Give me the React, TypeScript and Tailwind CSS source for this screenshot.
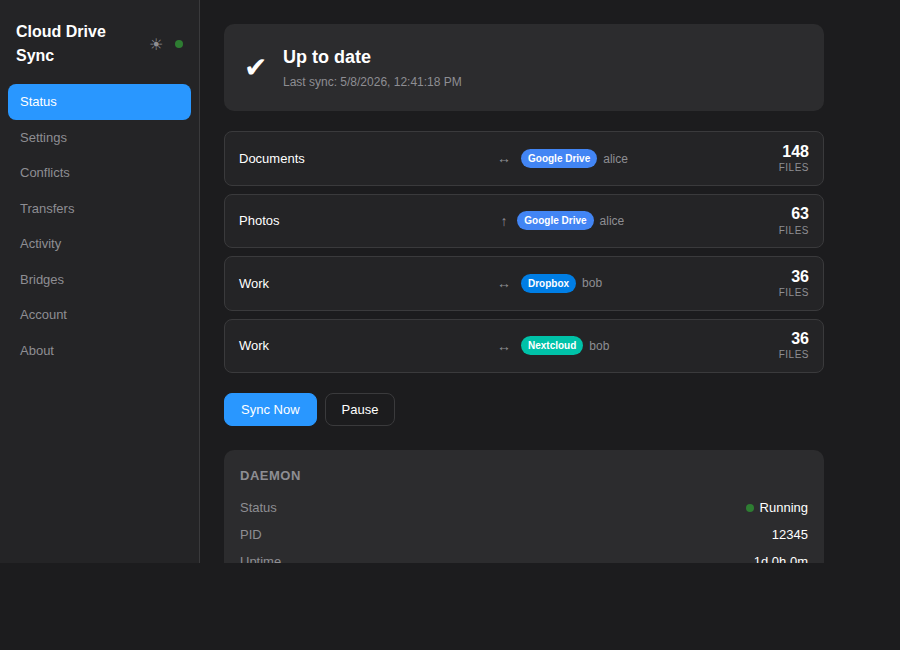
const nav = ["Status", "Settings", "Conflicts", "Transfers", "Activity", "Bridges", "Account", "About"];

const rows = [
  { name: "Documents", arrow: "↔", gap: "mr-[10px]", badge: "Google Drive", color: "bg-[#4285f4]", user: "alice", count: 148 },
  { name: "Photos", arrow: "↑", gap: "mr-[6.3px]", badge: "Google Drive", color: "bg-[#4285f4]", user: "alice", count: 63 },
  { name: "Work", arrow: "↔", gap: "mr-[10px]", badge: "Dropbox", color: "bg-[#007ee5]", user: "bob", count: 36 },
  { name: "Work", arrow: "↔", gap: "mr-[10px]", badge: "Nextcloud", color: "bg-[#00c2a8]", user: "bob", count: 36 },
];

const info = [
  ["PID", "12345"],
  ["Uptime", "1d 0h 0m"],
  ["Version", "1.0.0"],
];

export default function App() {
  return (
    <div className="h-[650px] overflow-hidden bg-[#1c1c1e] font-['Liberation_Sans',Arial,sans-serif] text-[13px] leading-normal text-white">
      <div className="flex h-[563px] overflow-hidden">
        <aside className="w-[200px] shrink-0 border-r border-[#3a3a3c] bg-[#242426] p-2">
          <div className="flex items-center justify-between px-2 pb-4 pt-3">
            <div className="w-[110px] text-[16px] font-bold leading-[24px]">Cloud Drive Sync</div>
            <div className="flex items-center gap-3">
              <span className="translate-y-px text-[16px] leading-none text-[#8e8e93]">☀</span>
              <span className="h-2 w-2 rounded-full bg-[#2e7d32]" />
            </div>
          </div>
          <nav className="flex flex-col">
            {nav.map((n, i) => (
              <div
                key={n}
                className={i === 0 ? "rounded-lg bg-[#2997ff] px-3 py-2 text-white" : "rounded-lg px-3 py-2 text-[#8e8e93]"}
              >
                {n}
              </div>
            ))}
          </nav>
        </aside>
        <main className="min-w-0 flex-1 overflow-hidden p-6">
          <div className="w-[600px]">
            <section className="mb-[20.4px] flex items-center gap-4 rounded-[10px] bg-[#2c2c2e] p-5">
              <span className="text-[28px] leading-none">✔</span>
              <div>
                <div className="text-[18px] font-bold leading-[27px]">Up to date</div>
                <div className="mt-0.5 text-[12px] text-[#8e8e93]">Last sync: 5/8/2026, 12:41:18 PM</div>
              </div>
            </section>
            <div className="flex flex-col gap-2">
              {rows.map((r, i) => (
                <div key={i} className="flex items-center rounded-lg border border-[#3a3a3c] bg-[#242426] px-[14px] py-[10px]">
                  <div className="w-[258px] shrink-0">{r.name}</div>
                  <div className="flex flex-1 items-center">
                    <span className={`w-[14px] pt-[0.6px] text-center text-[14px] text-[#8e8e93] ${r.gap}`}>{r.arrow}</span>
                    <span className={`mr-1.5 rounded-[10px] px-[7px] py-[3px] text-[10px] font-bold leading-[13px] ${r.color}`}>{r.badge}</span>
                    <span className="text-[12px] text-[#8e8e93]">{r.user}</span>
                  </div>
                  <div className="-mt-[0.4px] mb-[0.4px] text-right">
                    <div className="text-[16px] font-bold leading-[1.2]">{r.count}</div>
                    <div className="text-[10px] uppercase leading-[1.32] tracking-[0.5px] text-[#8e8e93]">Files</div>
                  </div>
                </div>
              ))}
            </div>
            <div className="mt-5 flex gap-2">
              <button className="rounded-lg border border-[#2997ff] bg-[#2997ff] px-4 py-1.5 text-[13px] text-white">Sync Now</button>
              <button className="rounded-lg border border-[#3a3a3c] px-4 py-1.5 text-[13px] text-white">Pause</button>
            </div>
            <section className="mt-[23.6px] rounded-[10px] bg-[#2c2c2e] p-4">
              <div className="mb-2 text-[13px] font-bold uppercase tracking-[0.5px] text-[#8e8e93]">Daemon</div>
              <div className="flex justify-between pb-[3.5px] pt-[4.5px]">
                <span className="text-[#8e8e93]">Status</span>
                <span className="flex items-center gap-1.5">
                  <span className="h-2 w-2 rounded-full bg-[#2e7d32]" />
                  Running
                </span>
              </div>
              {info.map(([k, v]) => (
                <div key={k} className="flex justify-between py-1">
                  <span className="text-[#8e8e93]">{k}</span>
                  <span>{v}</span>
                </div>
              ))}
            </section>
          </div>
        </main>
      </div>
    </div>
  );
}
